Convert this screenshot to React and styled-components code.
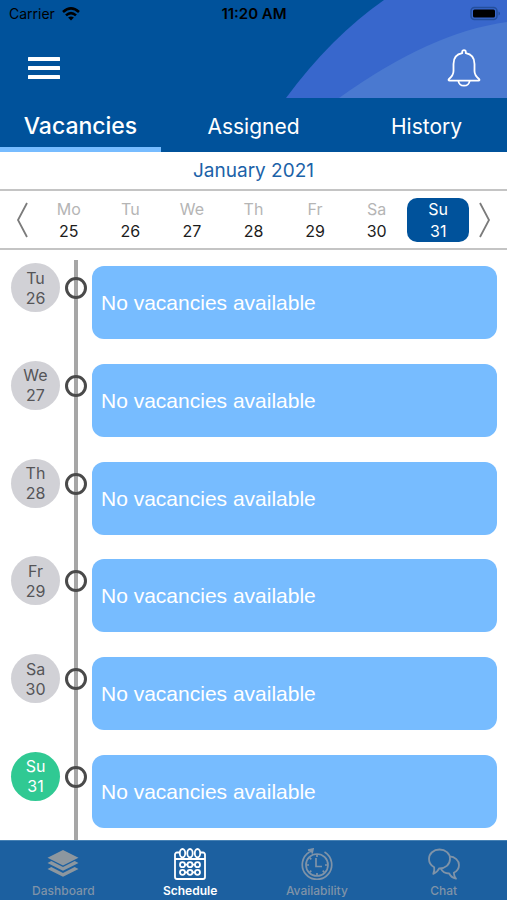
import { useState } from 'react';
import styled, { createGlobalStyle } from 'styled-components';

const GlobalStyle = createGlobalStyle`
	* {
		box-sizing: border-box;
	}

	body {
		margin: 0;
		background-color: white;
		font-family: Inter, Roboto, 'Liberation Sans', sans-serif;
	}

	button {
		margin: 0;
		padding: 0;
		border: none;
		background: none;
		color: inherit;
		font: inherit;
		cursor: pointer;
	}
`;

const Screen = styled.div`
	display: flex;
	flex-direction: column;
	min-height: 100vh;
`;

const Header = styled.header`
	position: relative;
	background-color: #00529b;
`;

const HeaderArt = styled.svg`
	position: absolute;
	top: 0;
	right: 0;
	width: 224px;
	height: 98px;
`;

const StatusBar = styled.div`
	position: relative;
	display: grid;
	grid-template-columns: 1fr auto 1fr;
	align-items: center;
	height: 27px;
	padding: 0 6px 0 7px;
	color: black;
	font-size: 14px;
`;

const Carrier = styled.div`
	display: flex;
	align-items: center;
	gap: 7px;
	padding-left: 2px;
`;

const Clock = styled.div`
	font-size: 15px;
	font-weight: 600;
`;

const Battery = styled.svg`
	justify-self: end;
`;

const Toolbar = styled.div`
	position: relative;
	display: flex;
	align-items: center;
	justify-content: space-between;
	height: 72px;
	padding: 10px 26px 0;
	color: white;
`;

const IconBtn = styled.button`
	display: flex;
`;

const Tabs = styled.nav`
	display: grid;
	grid-template-columns: repeat(3, 1fr);
	gap: 12px;
	height: 53px;
	background-color: #00529b;
`;

const Tab = styled.button`
	color: white;
	font-size: ${({ $active }) => ($active ? '23px' : '21px')};
	font-weight: ${({ $active }) => ($active ? 500 : 400)};
	padding-top: 6px;
	border-bottom: 5px solid ${({ $active }) => ($active ? '#77bcff' : 'transparent')};
`;

const Month = styled.h1`
	margin: 0;
	color: #1b62a8;
	font-size: 19px;
	font-weight: 400;
	line-height: 37px;
	text-align: center;
`;

const Week = styled.div`
	display: grid;
	grid-template-columns: 38px repeat(7, 1fr) 38px;
	align-items: center;
	height: 61px;
	border-top: 2px solid #c4c4c4;
	border-bottom: 2px solid #c4c4c4;
`;

const ArrowBtn = styled.button`
	display: flex;
	justify-content: ${({ $side }) => ($side === 'left' ? 'flex-end' : 'flex-start')};
	padding: 0 9px;
	color: #7b7b7b;
`;

const Day = styled.button`
	display: flex;
	flex-direction: column;
	align-items: center;
	height: 44px;
	border-radius: 10px;
	font-size: 16px;
	line-height: 22px;
	color: ${({ $active }) => ($active ? 'white' : '#1c1c1c')};
	background-color: ${({ $active }) => ($active ? '#00529b' : 'transparent')};
`;

const DayName = styled.span`
	color: ${({ $active }) => ($active ? 'white' : '#b5b5b5')};
`;

const Timeline = styled.ul`
	flex: 1;
	display: flex;
	flex-direction: column;
	justify-content: space-between;
	gap: 20px;
	margin: 10px 0 0;
	padding: 3px 10px 12px 11px;
	list-style: none;
	background: linear-gradient(#a6a6a6, #a6a6a6) 74px 0 / 4px 100% no-repeat;
`;

const Row = styled.li`
	display: flex;
	align-items: flex-start;
	gap: 5px;
`;

const DateBadge = styled.div`
	display: flex;
	flex-direction: column;
	align-items: center;
	justify-content: center;
	width: 49px;
	height: 49px;
	border-radius: 50%;
	font-size: 16px;
	line-height: 20px;
	color: ${({ $active }) => ($active ? 'white' : '#555558')};
	background-color: ${({ $active }) => ($active ? '#30c993' : '#d1d1d6')};
`;

const Ring = styled.div`
	width: 22px;
	height: 22px;
	margin-top: 14px;
	border: 3px solid #4a4a4a;
	border-radius: 50%;
`;

const Card = styled.div`
	flex: 1;
	display: flex;
	align-items: center;
	height: 73px;
	margin-top: 3px;
	padding: 1px 9px 0;
	border-radius: 12px;
	color: white;
	background-color: #77bcff;
	font-family: 'Liberation Sans', Arial, sans-serif;
	font-size: 21px;
`;

const BottomNav = styled.nav`
	display: grid;
	grid-template-columns: repeat(4, 1fr);
	height: 60px;
	border-top: 1px solid #4681b4;
	background-color: #1c60a0;
`;

const NavBtn = styled.button`
	display: flex;
	flex-direction: column;
	align-items: center;
	gap: 3px;
	padding-top: 7px;
	font-size: 12px;
	font-weight: ${({ $active }) => ($active ? 600 : 500)};
	line-height: 16px;
	color: ${({ $active }) => ($active ? 'white' : '#7f93a8')};
`;

const WifiIcon = () => (
	<svg width='18' height='14' viewBox='0 0 18 14' fill='none' stroke='black' strokeWidth='2.6'>
		<path d='M1 5Q9-2.2 17 5' />
		<path d='M4 8.4Q9 3.8 14 8.4' />
		<path d='M9 13.5 6.1 10.6Q9 8.2 11.9 10.6Z' fill='black' stroke='none' />
	</svg>
);

const MenuIcon = () => (
	<svg width='35' height='24' viewBox='0 0 35 24' fill='white'>
		<rect x='2' y='1' width='32' height='4' rx='0.5' />
		<rect x='2' y='10' width='32' height='4' rx='0.5' />
		<rect x='2' y='19' width='32' height='4' rx='0.5' />
	</svg>
);

const BellIcon = () => (
	<svg width='34' height='38' viewBox='0 0 34 38' fill='none' stroke='white' strokeWidth='1.8' strokeLinejoin='round'>
		<path d='M15.2 4.2V3a1.8 1.8 0 0 1 3.6 0v1.2C24.5 5.2 27.5 9.5 27.5 15v7c0 3.5 1.5 5.5 4.5 8 .8.8.5 1.7-.6 1.7H2.6C1.5 31.7 1.2 30.8 2 30c3-2.5 4.5-4.5 4.5-8v-7c0-5.5 3-9.8 8.7-10.8Z' />
		<path d='M11.4 32c.4 3 2.6 4.7 5.6 4.7s5.2-1.7 5.6-4.7' />
	</svg>
);

const Arrow = ({ points }) => (
	<svg width='14' height='38' viewBox='0 0 14 38' fill='none' stroke='currentColor' strokeWidth='1.8'>
		<polyline points={points} />
	</svg>
);

const LayersIcon = () => (
	<svg width='32' height='32' viewBox='0 0 32 32' fill='#8d979f'>
		<path d='M16 2 31.5 9.8 16 17.6.5 9.8Z' />
		<path d='m.5 15 3.8-1.9L16 18.9l11.7-5.8 3.8 1.9L16 22.8Z' />
		<path d='m.5 21 3.8-1.9L16 24.9l11.7-5.8 3.8 1.9L16 28.8Z' />
	</svg>
);

const CalendarIcon = () => (
	<svg width='32' height='32' viewBox='0 0 32 32' fill='none' stroke='currentColor' strokeWidth='1.8'>
		<path d='M5.5 4.5H3A2 2 0 0 0 1 6.5V29a2 2 0 0 0 2 2h26a2 2 0 0 0 2-2V6.5a2 2 0 0 0-2-2h-2.5M1 11h30' />
		{[8.5, 16, 23.5].map((x) => (
			<g key={x}>
				<ellipse cx={x} cy='5.2' rx='2.7' ry='4.2' />
				<circle cx={x} cy='16.7' r='2.5' />
				<circle cx={x} cy='24.3' r='2.5' />
			</g>
		))}
		<path d='M11 16.7h2.5m5 0H21m-10 7.6h2.5m5 0H21' />
	</svg>
);

const ClockIcon = () => (
	<svg width='32' height='32' viewBox='0 0 32 32' fill='none' stroke='currentColor' strokeWidth='1.7'>
		<circle cx='16' cy='17' r='11' />
		<path d='M8.5 4A14.7 14.7 0 1 0 23.5 4' />
		<path d='M7 2.2 12 1 11 5.5M8.5 4l3-1.5' />
		<path d='M15 10v8.5h6M16 6v3m0 16v3M5 17h3m16 0h3M8.5 9.5l1.8 1.8m11.4 11.4 1.8 1.8m-15 0 1.8-1.8' />
	</svg>
);

const ChatIcon = () => (
	<svg width='32' height='32' viewBox='0 0 32 32' fill='none' stroke='currentColor' strokeWidth='1.8' strokeLinejoin='round'>
		<path d='M11.5 1.5C5.6 1.5 1 5.6 1 11c0 3.7 2 6.6 5.2 8.3.4 2.2-.1 4.6-.9 6.5 2.6-1 4.5-2.6 5.7-5.3C17.3 20.7 22 16.6 22 11s-4.6-9.500-10.500-9.500Z' />
		<path d='M21.6 8.4c5.3.3 9.4 4 9.4 8.6 0 3.5-2 6.2-5.2 7.7.1 2.2.9 4.200 2.200 6-3-.7-5.300-2.200-6.800-5.200-3.800-.1-7-2-8.400-5.200' />
	</svg>
);

const days = [
	{ name: 'Mo', date: 25 },
	{ name: 'Tu', date: 26 },
	{ name: 'We', date: 27 },
	{ name: 'Th', date: 28 },
	{ name: 'Fr', date: 29 },
	{ name: 'Sa', date: 30 },
	{ name: 'Su', date: 31 },
];

const navItems = [
	{ label: 'Dashboard', Icon: LayersIcon },
	{ label: 'Schedule', Icon: CalendarIcon },
	{ label: 'Availability', Icon: ClockIcon },
	{ label: 'Chat', Icon: ChatIcon },
];

const App = () => {
	const [tab, setTab] = useState('Vacancies');
	const [selected, setSelected] = useState(31);
	const [page, setPage] = useState('Schedule');

	return (
		<Screen>
			<GlobalStyle />
			<Header>
				<HeaderArt viewBox='0 0 224 98'>
					<path d='M3 98Q48 37 101 0H224V98Z' fill='#3867cc' />
					<path d='M56 98Q148 32 224 22V98Z' fill='#4a79d0' />
				</HeaderArt>
				<StatusBar>
					<Carrier>
						Carrier
						<WifiIcon />
					</Carrier>
					<Clock>11:20 AM</Clock>
					<Battery width='31' height='15' viewBox='0 0 31 15'>
						<rect x='1' y='1.5' width='26' height='12' rx='3.5' fill='none' stroke='#244f9c' strokeWidth='1.5' />
						<rect x='3' y='3.5' width='22' height='8' rx='1.5' fill='black' />
						<path d='M28.5 5.5v4q1.5-.5 1.5-2t-1.5-2Z' fill='#244f9c' />
					</Battery>
				</StatusBar>
				<Toolbar>
					<IconBtn aria-label='Menu'>
						<MenuIcon />
					</IconBtn>
					<IconBtn aria-label='Notifications'>
						<BellIcon />
					</IconBtn>
				</Toolbar>
			</Header>
			<Tabs>
				{['Vacancies', 'Assigned', 'History'].map((name) => (
					<Tab key={name} $active={tab === name} onClick={() => setTab(name)}>
						{name}
					</Tab>
				))}
			</Tabs>
			<Month>January 2021</Month>
			<Week>
				<ArrowBtn $side='left' aria-label='Previous week'>
					<Arrow points='12,2 3,19 12,36' />
				</ArrowBtn>
				{days.map(({ name, date }) => (
					<Day key={date} $active={selected === date} onClick={() => setSelected(date)}>
						<DayName $active={selected === date}>{name}</DayName>
						<span>{date}</span>
					</Day>
				))}
				<ArrowBtn $side='right' aria-label='Next week'>
					<Arrow points='2,2 11,19 2,36' />
				</ArrowBtn>
			</Week>
			<Timeline>
				{days.slice(1).map(({ name, date }) => (
					<Row key={date}>
						<DateBadge $active={selected === date}>
							<span>{name}</span>
							<span>{date}</span>
						</DateBadge>
						<Ring />
						<Card>No vacancies available</Card>
					</Row>
				))}
			</Timeline>
			<BottomNav>
				{navItems.map(({ label, Icon }) => (
					<NavBtn key={label} $active={page === label} onClick={() => setPage(label)}>
						<Icon />
						{label}
					</NavBtn>
				))}
			</BottomNav>
		</Screen>
	);
};

export default App;
